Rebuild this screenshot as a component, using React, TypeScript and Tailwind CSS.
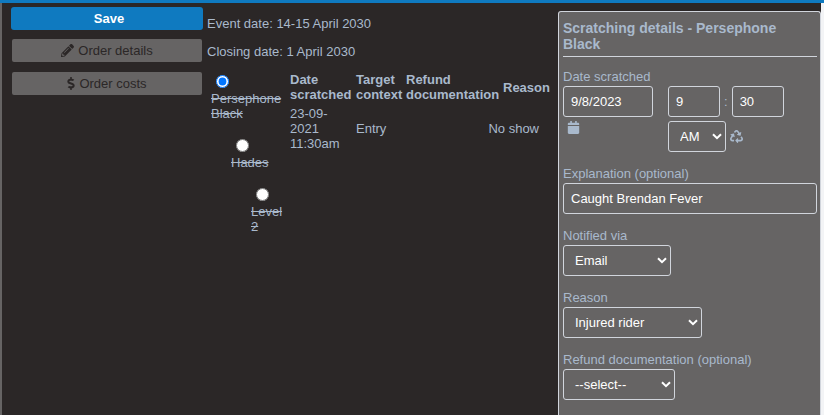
import { useState } from 'react';
import type { ReactNode } from 'react';
import { FaCalendar, FaDollarSign, FaPencilAlt, FaRecycle } from 'react-icons/fa';

interface Entrant {
  id: string;
  name: string;
  indent: string;
}

const entrants: Entrant[] = [
  { id: 'persephone', name: 'Persephone Black', indent: 'ml-0' },
  { id: 'hades', name: 'Hades', indent: 'ml-5' },
  { id: 'level', name: 'Level 2', indent: 'ml-10' },
];

const fieldClass =
  'h-[31px] rounded-[3px] border border-gray-300 bg-transparent px-[7px] text-[13px] text-white';

interface SelectProps {
  id: string;
  label?: string;
  options: string[];
  className: string;
}

function Select({ id, label, options, className }: SelectProps) {
  return (
    <div className="relative w-fit">
      <select id={id} aria-label={label} className={`block appearance-none pl-[11px] ${fieldClass} ${className}`}>
        {options.map(option => (
          <option key={option} className="bg-[#666464]">{option}</option>
        ))}
      </select>
      <svg viewBox="0 0 10 7" className="pointer-events-none absolute top-3 right-1 h-[7px] w-[10px]" fill="none" stroke="white" strokeWidth="2">
        <path d="M1 1.2 5 5.2 9 1.2" />
      </svg>
    </div>
  );
}

function Field({ id, label, children }: { id: string; label: string; children: ReactNode }) {
  return (
    <div className="mb-[14px]">
      <label htmlFor={id} className="mb-[2px] block">{label}</label>
      {children}
    </div>
  );
}

function SideButton({ icon, label }: { icon: ReactNode; label: string }) {
  return (
    <button className="mx-px flex h-[23px] items-center justify-center gap-1 rounded-[2px] bg-[#666464] text-[#2b2727]">
      {icon}
      <span>{label}</span>
    </button>
  );
}

export default function App() {
  const [selected, setSelected] = useState('persephone');

  return (
    <div className="min-h-screen flex border-t-3 border-[#0f7ac0] bg-[#2b2727] font-['Liberation_Sans',Arial,sans-serif] text-[13px] leading-[15px] text-[#a9b9cc]">
      <div className="w-[2px] shrink-0 bg-[#666464]" />

      {/* Actions */}
      <nav className="ml-[9px] mt-1 flex w-[192px] shrink-0 flex-col">
        <button className="mb-[9px] h-[23px] rounded-[3px] bg-[#0f7ac0] pl-1 font-bold text-white">Save</button>
        <div className="flex flex-col gap-[10px]">
          <SideButton icon={<FaPencilAlt className="size-[13px]" />} label="Order details" />
          <SideButton icon={<FaDollarSign className="h-[13px] w-2" />} label="Order costs" />
        </div>
      </nav>

      {/* Event and its entrants */}
      <main className="ml-1 min-w-0 flex-1">
        <p className="mt-[13px]">Event date: 14-15 April 2030</p>
        <p className="mt-[13px]">Closing date: 1 April 2030</p>
        <div className="mt-[13px] flex">
          <div className="w-[82px] shrink-0 pl-1">
            {entrants.map(entrant => (
              <div key={entrant.id} className={`mb-[18px] w-8 ${entrant.indent}`}>
                <input
                  type="radio"
                  id={entrant.id}
                  name="entrant"
                  checked={selected === entrant.id}
                  onChange={() => setSelected(entrant.id)}
                  className="ml-[5px] mt-[3px] block size-[13px]"
                />
                <label htmlFor={entrant.id} className="mt-[3px] block line-through">{entrant.name}</label>
              </div>
            ))}
          </div>
          <table className="h-fit w-[264px] table-fixed">
            <thead>
              <tr className="text-left">
                <th className="w-[66px] p-0 pl-px">Date scratched</th>
                <th className="w-[50px] p-0 pl-px">Target context</th>
                <th className="w-[97px] p-0 pl-px">Refund documentation</th>
                <th className="p-0 pl-px">Reason</th>
              </tr>
            </thead>
            <tbody>
              <tr>
                <td className="p-0 pl-px pt-1">23-09-<br />2021<br />11:30am</td>
                <td className="p-0 pl-px pt-1">Entry</td>
                <td colSpan={2} className="p-0 pr-[14px] pt-1 text-right">No show</td>
              </tr>
            </tbody>
          </table>
        </div>
      </main>

      {/* Scratching form */}
      <section className="mt-2 w-[263px] shrink-0 rounded-t-[3px] border border-b-0 border-gray-300 bg-[#666464] pt-2 pr-[3px] pl-1">
        <h2 className="mb-3 border-b border-gray-300 pb-1 text-[14px] leading-4 font-bold">
          Scratching details - Persephone Black
        </h2>
        <label htmlFor="date" className="mb-[2px] block">Date scratched</label>
        <div className="mb-[14px] flex gap-[15px]">
          <div>
            <input id="date" defaultValue="9/8/2023" className={`block w-[90px] ${fieldClass}`} />
            <button aria-label="Pick a date" className="ml-1 mt-1 block">
              <FaCalendar className="size-[13px]" />
            </button>
          </div>
          <div>
            <div className="flex items-center gap-1">
              <input aria-label="Hour" defaultValue="9" className={`w-[52px] ${fieldClass}`} />
              <span>:</span>
              <input aria-label="Minute" defaultValue="30" className={`w-[52px] ${fieldClass}`} />
            </div>
            <div className="mt-1 flex items-center gap-1">
              <Select id="meridiem" label="AM or PM" options={['AM', 'PM']} className="w-[58px]" />
              <button aria-label="Reset time"><FaRecycle className="size-[13px]" /></button>
            </div>
          </div>
        </div>
        <Field id="explanation" label="Explanation (optional)">
          <input id="explanation" defaultValue="Caught Brendan Fever" className={`block w-full ${fieldClass}`} />
        </Field>
        <Field id="notified" label="Notified via">
          <Select id="notified" options={['Email', 'Phone']} className="w-[108px]" />
        </Field>
        <Field id="reason" label="Reason">
          <Select id="reason" options={['Injured rider', 'Injured horse']} className="w-[139px]" />
        </Field>
        <Field id="refund" label="Refund documentation (optional)">
          <Select id="refund" options={['--select--']} className="w-[112px]" />
        </Field>
      </section>
      <div className="w-[3px] shrink-0 bg-gray-100" />
    </div>
  );
}
